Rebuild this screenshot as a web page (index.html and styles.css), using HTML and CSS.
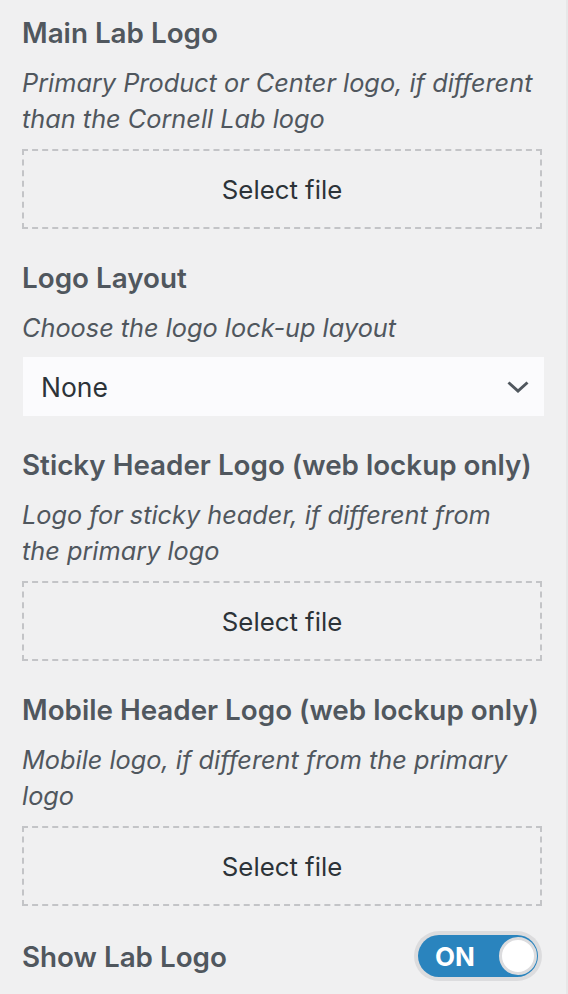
FILE: index.html
```html
<!DOCTYPE html>
<html>
<head>
	<meta charset="UTF-8">
	<link rel="stylesheet" href="styles.css">
</head>
<body>
<div class="panel">
	<div class="control">
		<span class="control-title">Main Lab Logo</span>
		<span class="control-desc">Primary Product or Center logo, if different than the Cornell Lab logo</span>
		<button type="button" class="upload-btn">Select file</button>
	</div>
	<div class="control">
		<span class="control-title">Logo Layout</span>
		<span class="control-desc">Choose the logo lock-up layout</span>
		<div class="select">
			<span>None</span>
			<svg class="chevron" width="22" height="12" viewBox="0 0 22 12"><polyline points="1.5,1.5 11,10 20.5,1.5" fill="none" stroke="#50575e" stroke-width="3"/></svg>
		</div>
	</div>
	<div class="control">
		<span class="control-title">Sticky Header Logo (web lockup only)</span>
		<span class="control-desc">Logo for sticky header, if different from the primary logo</span>
		<button type="button" class="upload-btn">Select file</button>
	</div>
	<div class="control">
		<span class="control-title">Mobile Header Logo (web lockup only)</span>
		<span class="control-desc">Mobile logo, if different from the primary logo</span>
		<button type="button" class="upload-btn">Select file</button>
	</div>
	<div class="control toggle-row">
		<span class="control-title">Show Lab Logo</span>
		<label class="toggle">
			<span class="toggle-track">
				<span class="toggle-label">ON</span>
				<span class="toggle-knob"></span>
			</span>
		</label>
	</div>
</div>
</body>
</html>
```
FILE: styles.css
```css
body{margin:0;background:#f0f0f1;font-family:Inter,"Noto Sans",sans-serif;}
.panel{box-sizing:border-box;width:568px;min-height:100vh;padding:15px 20px 0 22px;border-right:2px solid #e7e7e8;}
.control{margin-bottom:31px;}
.control-title{display:block;font-size:27.8px;line-height:36px;font-weight:600;color:#50575e;margin-bottom:14px;white-space:nowrap;}
.control-desc{display:block;max-width:512px;font-size:25.3px;line-height:36px;font-style:italic;color:#50575e;margin-bottom:12px;}
.upload-btn{display:block;box-sizing:border-box;width:520px;height:80px;margin:0;padding:0;background:none;border:2px dashed #c3c4c7;font-family:inherit;font-size:25.8px;color:#2c3338;cursor:pointer;}
.select{box-sizing:border-box;display:flex;align-items:center;justify-content:space-between;width:521px;height:59px;margin:-1px 0 0 1px;padding:0 15px 0 18px;background:#fbfbfd;font-size:26.5px;color:#2c3338;}
.chevron{display:block;}
.toggle-row{display:flex;align-items:center;justify-content:space-between;margin-right:4px;padding-top:2px;}
.toggle-row .control-title{margin-bottom:0;}
.toggle{display:block;box-sizing:border-box;width:128px;height:50px;margin:-8px 0 -6px;padding:4px;border-radius:25px;background:#dcdcde;}
.toggle-track{display:flex;align-items:center;justify-content:space-between;height:42px;border-radius:21px;background:#2a84be;padding:0 1px 0 17px;}
.toggle-label{font-size:26px;font-weight:700;color:#fff;}
.toggle-knob{box-sizing:border-box;width:38px;height:38px;border-radius:50%;background:#fff;border:3px solid #dcdcde;}
```
